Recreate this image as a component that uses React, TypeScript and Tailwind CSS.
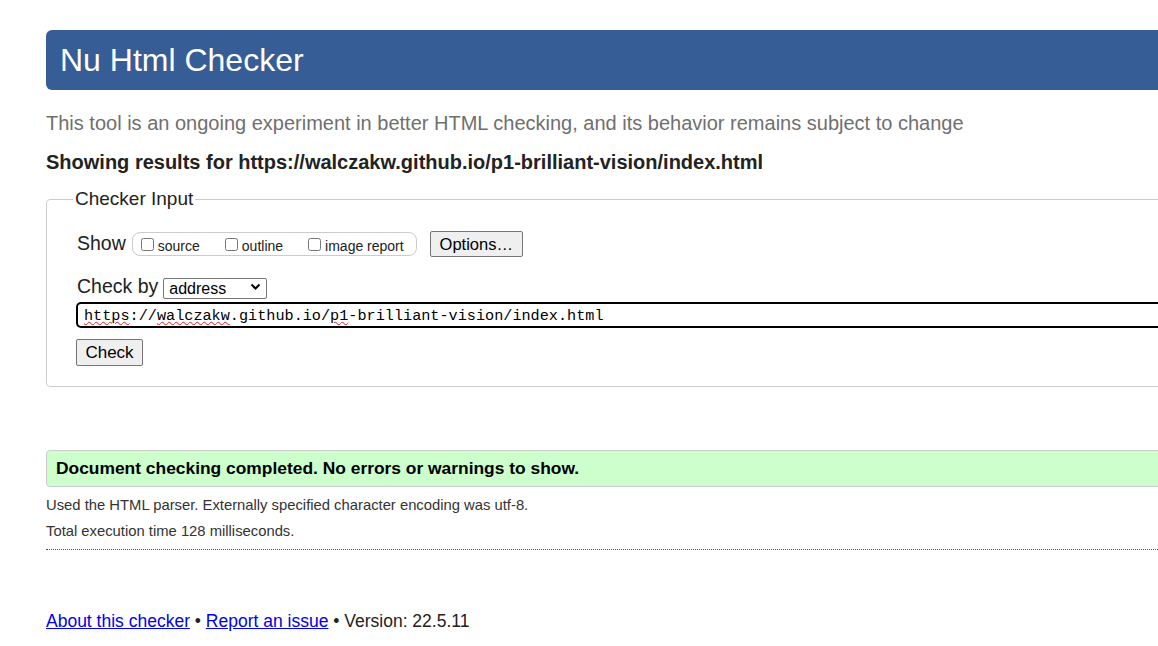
import React from 'react';

const sans = { fontFamily: '"Liberation Sans", Arial, sans-serif' };

const Wavy = ({ children }: { children: React.ReactNode }) => (
  <span className="underline decoration-wavy decoration-[#e01b1b] decoration-1 underline-offset-[1px]">{children}</span>
);

export default function App() {
  return (
    <div className="h-screen w-screen overflow-hidden bg-white text-[#222]" style={sans}>
      <div className="ml-[46px] w-[1300px]">
        {/* header */}
        <div className="mt-[30px] flex h-[60px] items-center rounded-[6px] bg-[#365d96] pl-[14px]">
          <h1 className="text-[32px] leading-none text-white">Nu Html Checker</h1>
        </div>

        <p className="mt-[22px] text-[20px] leading-[23px] text-[#6f6f6f]">
          This tool is an ongoing experiment in better HTML checking, and its behavior remains subject to change
        </p>
        <p className="mt-[16px] text-[20px] font-bold leading-[22px] text-[#222]">
          Showing results for https://walczakw.github.io/p1-brilliant-vision/index.html
        </p>

        {/* checker input */}
        <fieldset className="mt-[15px] rounded-[4px] border border-[#cccccc] pb-[20px] pl-[29px]">
          <legend className="-ml-[3px] px-[2px] text-[19px] leading-[22px] text-[#222]">Checker Input</legend>

          <div className="mt-[20px] flex h-[28px] items-center">
            <span className="ml-[1px] text-[19.5px] leading-none">Show</span>
            <div className="ml-[6px] flex h-[24px] w-[285px] items-center rounded-[8px] border border-[#cccccc] pl-[8px] text-[14px]">
              <label className="flex items-center gap-[4px]">
                <input type="checkbox" className="m-0 h-[13px] w-[13px]" />
                <span className="mt-[4px]">source</span>
              </label>
              <label className="ml-[25px] flex items-center gap-[4px]">
                <input type="checkbox" className="m-0 h-[13px] w-[13px]" />
                <span className="mt-[4px]">outline</span>
              </label>
              <label className="ml-[25px] flex items-center gap-[4px]">
                <input type="checkbox" className="m-0 h-[13px] w-[13px]" />
                <span className="mt-[4px]">image report</span>
              </label>
            </div>
            <button className="ml-[13px] h-[26px] w-[93px] rounded-[2px] border border-[#767676] bg-[#efefef] text-[16.5px] leading-none text-black">
              Options…
            </button>
          </div>

          <div className="mt-[18px] flex h-[22px] items-center">
            <span className="ml-[1px] text-[19.5px] leading-none">Check by</span>
            <div className="relative ml-[5px] h-[21px] w-[104px]">
              <select className="h-full w-full appearance-none rounded-[2px] border border-[#767676] bg-white pl-[5px] text-[16px] leading-none text-black">
                <option>address</option>
              </select>
              <svg className="pointer-events-none absolute right-[6px] top-[6px]" width="11" height="8" viewBox="0 0 11 8">
                <path d="M1.5 1.5 L5.5 5.5 L9.5 1.5" fill="none" stroke="#000" strokeWidth="2" />
              </svg>
            </div>
          </div>

          <div className="mt-[4px] flex h-[26px] items-center rounded-[5px] border-2 border-black pl-[6px]">
            <span className="pt-[1px] text-[15.2px] leading-[18px] text-black" style={{ fontFamily: '"Liberation Mono", "DejaVu Sans Mono", monospace' }}>
              <Wavy>https</Wavy>://<Wavy>walczakw</Wavy>.github.io/<Wavy>p1</Wavy>-brilliant-vision/index.html
            </span>
          </div>

          <button className="mt-[11px] h-[27px] w-[67px] rounded-[2px] border border-[#767676] bg-[#efefef] text-[17px] leading-none text-black">
            Check
          </button>
        </fieldset>

        {/* result */}
        <div className="mt-[63px] flex h-[37px] items-center rounded-l-[4px] border border-[#cccccc] bg-[#ccffcc] pl-[9px]">
          <span className="text-[17.4px] font-bold text-black">Document checking completed. No errors or warnings to show.</span>
        </div>

        <p className="mt-[10px] text-[14.8px] leading-[17px] text-[#333]">
          Used the HTML parser. Externally specified character encoding was utf-8.
        </p>
        <p className="mt-[9px] text-[14.8px] leading-[17px] text-[#333]">Total execution time 128 milliseconds.</p>
        <div className="mt-[9px] border-b border-dotted border-[#555]" />

        <p className="mt-[61px] text-[17.5px] leading-[21px] text-[#222]">
          <a href="#" className="text-[#0000ee] underline">About this checker</a> •{' '}
          <a href="#" className="text-[#0000ee] underline">Report an issue</a> • Version: 22.5.11
        </p>
      </div>
    </div>
  );
}
